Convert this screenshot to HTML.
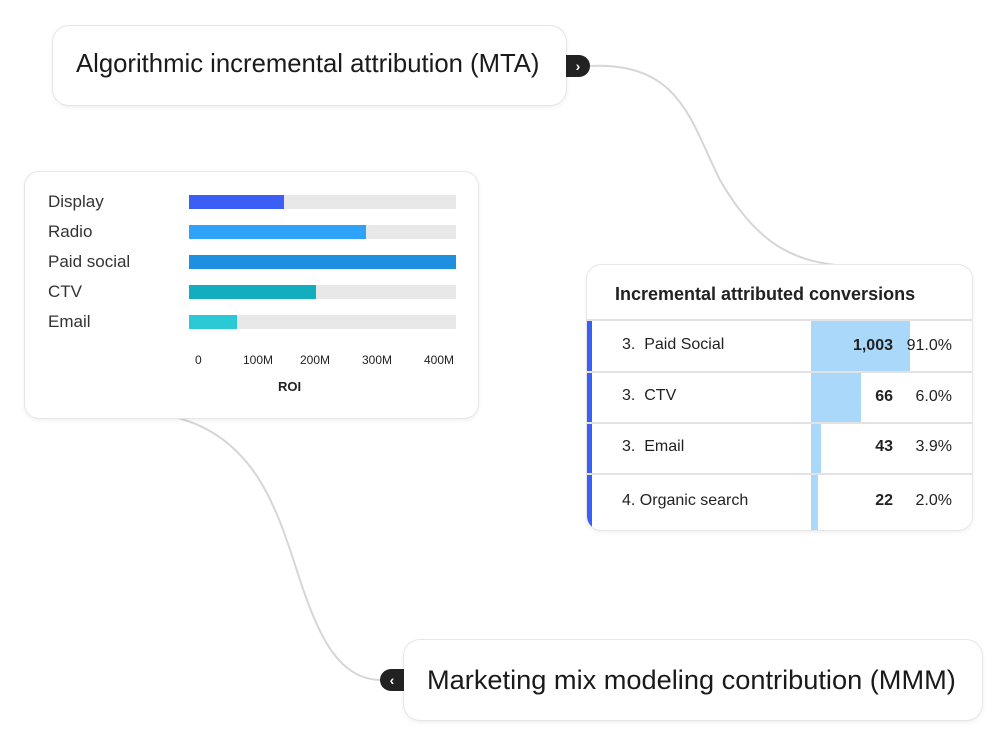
<!DOCTYPE html>
<html><head><style>
body{margin:0;width:1000px;height:750px;background:#fff;position:relative;overflow:hidden;font-family:"Liberation Sans",sans-serif;color:#222}
.card{position:absolute;background:#fff;border-radius:14px;box-shadow:0 0 0 1px #e6e6e6,0 2px 6px rgba(0,0,0,.08)}
.pill{position:absolute;font-size:26px;color:#1a1a1a;white-space:nowrap}
.badge{position:absolute;background:#222;width:24px;height:22px;color:#fff;font-size:14px;font-weight:bold;line-height:22px;text-align:center}
.lab{position:absolute;left:23px;font-size:17px;color:#333}
.bg{position:absolute;left:164px;width:267px;height:14px;background:#e8e8e8}
.bar{position:absolute;left:0;top:0;height:14px}
.ax{position:absolute;top:181px;font-size:12px;color:#222}
.row{position:absolute;left:0;width:385px;border-top:2px solid #e2e2e2;font-size:16px}
.row .n{position:absolute;left:35px}
.row .b{position:absolute;left:224px;top:0;bottom:0;background:#aad8fb}
.row .v{position:absolute;right:79px;font-weight:bold}
.row .p{position:absolute;right:20px}
</style></head><body>
<svg width="1000" height="750" style="position:absolute;left:0;top:0">
<path d="M590 66 C680 62,690 120,720 180 C760 250,800 262,845 266" fill="none" stroke="#d6d6d6" stroke-width="2"/>
<path d="M178 418 C260 440,280 520,300 580 C320 640,340 680,382 680" fill="none" stroke="#d6d6d6" stroke-width="2"/>
</svg>
<div class="card" style="left:53px;top:26px;width:513px;height:79px;border-radius:16px"></div>
<div class="pill" style="left:76px;top:50px;font-size:25.7px">Algorithmic incremental attribution (MTA)</div>
<div class="badge" style="left:566px;top:55px;border-radius:0 11px 11px 0">›</div>

<div class="card" style="left:25px;top:172px;width:453px;height:246px">
<div class="lab" style="top:20px">Display</div>
<div class="lab" style="top:50px">Radio</div>
<div class="lab" style="top:80px">Paid social</div>
<div class="lab" style="top:110px">CTV</div>
<div class="lab" style="top:140px">Email</div>
<div class="bg" style="top:23px"><div class="bar" style="width:95px;background:#3b5ef5"></div></div>
<div class="bg" style="top:53px"><div class="bar" style="width:177px;background:#2ea3f7"></div></div>
<div class="bg" style="top:83px"><div class="bar" style="width:267px;background:#1e90e0"></div></div>
<div class="bg" style="top:113px"><div class="bar" style="width:127px;background:#12aebd"></div></div>
<div class="bg" style="top:143px"><div class="bar" style="width:48px;background:#2bc9d6"></div></div>
<div class="ax" style="left:170px">0</div>
<div class="ax" style="left:218px">100M</div>
<div class="ax" style="left:275px">200M</div>
<div class="ax" style="left:337px">300M</div>
<div class="ax" style="left:399px">400M</div>
<div class="ax" style="left:253px;top:207px;font-weight:bold;font-size:13px">ROI</div>
</div>

<div class="card" style="left:587px;top:265px;width:385px;height:265px;overflow:hidden">
<div style="position:absolute;left:28px;top:19px;font-size:18px;font-weight:bold;color:#222">Incremental attributed conversions</div>
<div style="position:absolute;left:0;top:55px;width:5px;bottom:0;background:#3b5ef5"></div>
<div class="row" style="top:54px;height:50px"><div class="b" style="width:99px"></div><div class="n" style="top:15px">3.&nbsp; Paid Social</div><div class="v" style="top:16px">1,003</div><div class="p" style="top:16px">91.0%</div></div>
<div class="row" style="top:106px;height:49px"><div class="b" style="width:50px"></div><div class="n" style="top:14px">3.&nbsp; CTV</div><div class="v" style="top:15px">66</div><div class="p" style="top:15px">6.0%</div></div>
<div class="row" style="top:157px;height:49px"><div class="b" style="width:10px"></div><div class="n" style="top:14px">3.&nbsp; Email</div><div class="v" style="top:14px">43</div><div class="p" style="top:14px">3.9%</div></div>
<div class="row" style="top:208px;height:57px"><div class="b" style="width:7px"></div><div class="n" style="top:17px">4. Organic search</div><div class="v" style="top:17px">22</div><div class="p" style="top:17px">2.0%</div></div>
</div>

<div class="card" style="left:404px;top:640px;width:578px;height:80px;border-radius:16px"></div>
<div class="pill" style="left:427px;top:664px;font-size:27.2px">Marketing mix modeling contribution (MMM)</div>
<div class="badge" style="left:380px;top:669px;border-radius:11px 0 0 11px">‹</div>
</body></html>
